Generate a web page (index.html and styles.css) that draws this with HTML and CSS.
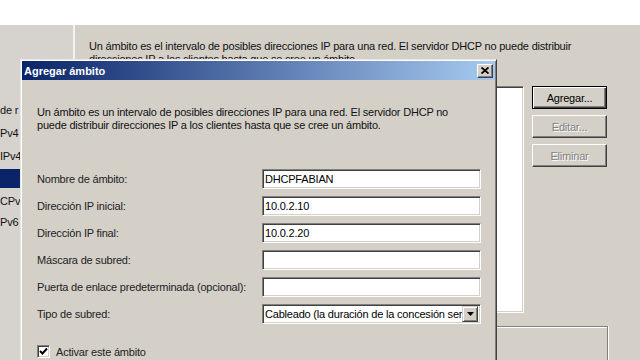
FILE: index.html
```html
<!DOCTYPE html>
<html lang="es">

<head>
  <meta charset="UTF-8">
  <meta name="viewport" content="width=device-width, initial-scale=1.0">
  <title>Agregar ámbito</title>
  <link rel="stylesheet" href="styles.css">
</head>

<body>
  <div class="topbar"></div>

  <div class="workspace">
    <ul class="tree">
      <li class="tree-item">de r</li>
      <li class="tree-item">Pv4</li>
      <li class="tree-item">IPv4</li>
      <li class="tree-item selected">&nbsp;</li>
      <li class="tree-item">CPv6</li>
      <li class="tree-item">Pv6</li>
    </ul>

    <div class="main-pane">
      <p class="intro">Un ámbito es el intervalo de posibles direcciones IP para una red. El servidor DHCP no puede distribuir<br>
        direcciones IP a los clientes hasta que se cree un ámbito.</p>

      <div class="scope-row">
        <div class="scope-list"></div>
        <div class="actions">
          <button type="button" class="btn default">Agregar...</button>
          <button type="button" class="btn" disabled>Editar...</button>
          <button type="button" class="btn" disabled>Eliminar</button>
        </div>
      </div>

      <div class="group-box"></div>
    </div>
  </div>

  <div class="dialog">
    <div class="title-bar">
      <span>Agregar ámbito</span>
      <button type="button" class="close-btn" aria-label="Cerrar">
        <svg width="8" height="7" viewBox="0 0 8 7">
          <path d="M0.5 0.5 L7.5 6.5 M7.5 0.5 L0.5 6.5" stroke="#000" stroke-width="1.8" />
        </svg>
      </button>
    </div>

    <div class="dialog-body">
      <p class="dialog-intro">Un ámbito es un intervalo de posibles direcciones IP para una red. El servidor DHCP no<br>
        puede distribuir direcciones IP a los clientes hasta que se cree un ámbito.</p>

      <form class="scope-form">
        <label for="scopeName">Nombre de ámbito:</label>
        <input type="text" id="scopeName" value="DHCPFABIAN">

        <label for="startIp">Dirección IP inicial:</label>
        <input type="text" id="startIp" value="10.0.2.10">

        <label for="endIp">Dirección IP final:</label>
        <input type="text" id="endIp" value="10.0.2.20">

        <label for="mask">Máscara de subred:</label>
        <input type="text" id="mask" value="">

        <label for="gateway">Puerta de enlace predeterminada (opcional):</label>
        <input type="text" id="gateway" value="">

        <label>Tipo de subred:</label>
        <div class="combo">
          <span class="combo-text">Cableado (la duración de la concesión ser</span>
          <span class="combo-btn">
            <svg width="7" height="4" viewBox="0 0 7 4">
              <path d="M0 0 H7 L3.5 4 Z" fill="#000" />
            </svg>
          </span>
        </div>
      </form>

      <div class="check-row">
        <span class="checkbox">
          <svg width="9" height="9" viewBox="0 0 9 9">
            <path d="M1 4 L3.5 6.5 L8 1.5" stroke="#000" stroke-width="2" fill="none" />
          </svg>
        </span>
        <span>Activar este ámbito</span>
      </div>
    </div>
  </div>
</body>

</html>
```

FILE: styles.css
```css
body {
  font-family: "Liberation Sans", Arial, sans-serif;
  font-size: 11px;
  letter-spacing: -0.2px;
  color: #000;
  margin: 0;
  width: 640px;
  height: 360px;
  overflow: hidden;
  position: relative;
  background-color: #fff;
}

.topbar {
  height: 25px;
  background-color: #fff;
}

.workspace {
  display: flex;
  height: 335px;
  background-color: #d4d0c8;
}

.tree {
  list-style: none;
  margin: 0;
  padding: 74px 0 0;
  width: 73px;
  background-color: #d6d3ce;
  border-right: 2px solid #f4f3f0;
}

.tree-item {
  height: 23px;
  line-height: 23px;
  white-space: nowrap;
  color: #111;
}

.tree-item.selected {
  height: 19px;
  margin: 1px 0 2px;
  background-color: #0a246a;
}

.tree-item:last-child {
  line-height: 19px;
}

.main-pane {
  flex: 1;
  padding: 15px 0 0 14px;
}

.intro {
  margin: 0;
  line-height: 13px;
  color: #111;
  white-space: nowrap;
}

.scope-row {
  display: flex;
  column-gap: 8px;
  margin-top: 20px;
}

.scope-list {
  width: 435px;
  height: 227px;
  box-sizing: border-box;
  background-color: #fff;
  border: 1px solid;
  border-color: #808080 #fff #fff #808080;
  box-shadow: inset 1px 1px #404040, inset -1px -1px #d4d0c8;
}

.actions {
  display: flex;
  flex-direction: column;
  row-gap: 6px;
  width: 75px;
}

.btn {
  height: 23px;
  padding: 0;
  font-family: inherit;
  font-size: 11px;
  letter-spacing: inherit;
  color: #000;
  background-color: #d4d0c8;
  border: 1px solid;
  border-color: #fff #404040 #404040 #fff;
  box-shadow: inset -1px -1px #808080;
}

.btn.default {
  border-color: #000;
  box-shadow: inset 1px 1px #fff, inset -1px -1px #404040, inset -2px -2px #808080;
}

.btn:disabled {
  color: #808080;
  text-shadow: 1px 1px #fff;
}

.group-box {
  width: 519px;
  height: 34px;
  margin-top: 13px;
  box-sizing: border-box;
  border: 1px solid #808080;
  border-bottom: none;
  box-shadow: inset 1px 1px #fff, 1px 0 #fff;
}

/* dialog window over the console */
.dialog {
  position: absolute;
  left: 20px;
  top: 59px;
  width: 477px;
  height: 301px;
  box-sizing: border-box;
  padding: 1px 1px 0;
  background-color: #d4d0c8;
  border: 1px solid;
  border-bottom: none;
  border-color: #e8e6e1 #404040 #404040 #e8e6e1;
  box-shadow: inset 1px 1px #fff, inset -1px 0 #808080;
}

.title-bar {
  display: flex;
  align-items: center;
  justify-content: space-between;
  height: 19px;
  padding: 0 2px 0 2px;
  color: #fff;
  font-weight: bold;
  letter-spacing: 0;
  background: linear-gradient(to right, #0a246a, #a6caf0);
}

.close-btn {
  display: flex;
  align-items: center;
  justify-content: center;
  width: 16px;
  height: 14px;
  padding: 0;
  background-color: #d4d0c8;
  border: 1px solid;
  border-color: #fff #404040 #404040 #fff;
  box-shadow: inset -1px -1px #808080;
}

.dialog-body {
  padding: 26px 15px 0;
}

.dialog-intro {
  margin: 0;
  line-height: 13px;
  color: #111;
  white-space: nowrap;
}

.scope-form {
  display: grid;
  grid-template-columns: 225px 219px;
  grid-auto-rows: 20px;
  row-gap: 7px;
  align-items: center;
  margin-top: 37px;
}

.scope-form label {
  color: #222;
}

.scope-form input,
.combo {
  height: 20px;
  width: 219px;
  box-sizing: border-box;
  margin: 0;
  padding: 0 2px;
  font-family: inherit;
  font-size: 11px;
  letter-spacing: inherit;
  color: #000;
  background-color: #fff;
  border: 1px solid;
  border-color: #808080 #fff #fff #808080;
  box-shadow: inset 1px 1px #404040, inset -1px -1px #d4d0c8;
  outline: none;
}

.combo {
  display: flex;
  align-items: center;
  padding: 0 2px 0 2px;
  overflow: hidden;
}

.combo-text {
  flex: 1;
  white-space: nowrap;
}

.combo-btn {
  display: flex;
  align-items: center;
  justify-content: center;
  flex: none;
  width: 16px;
  height: 16px;
  box-sizing: border-box;
  background-color: #d4d0c8;
  border: 1px solid;
  border-color: #d4d0c8 #404040 #404040 #d4d0c8;
  box-shadow: inset 1px 1px #fff, inset -1px -1px #808080;
}

.check-row {
  display: flex;
  align-items: center;
  column-gap: 6px;
  margin-top: 21px;
  color: #222;
}

.checkbox {
  display: flex;
  align-items: center;
  justify-content: center;
  width: 13px;
  height: 13px;
  box-sizing: border-box;
  background-color: #fff;
  border: 1px solid;
  border-color: #808080 #fff #fff #808080;
  box-shadow: inset 1px 1px #404040, inset -1px -1px #d4d0c8;
}
```
